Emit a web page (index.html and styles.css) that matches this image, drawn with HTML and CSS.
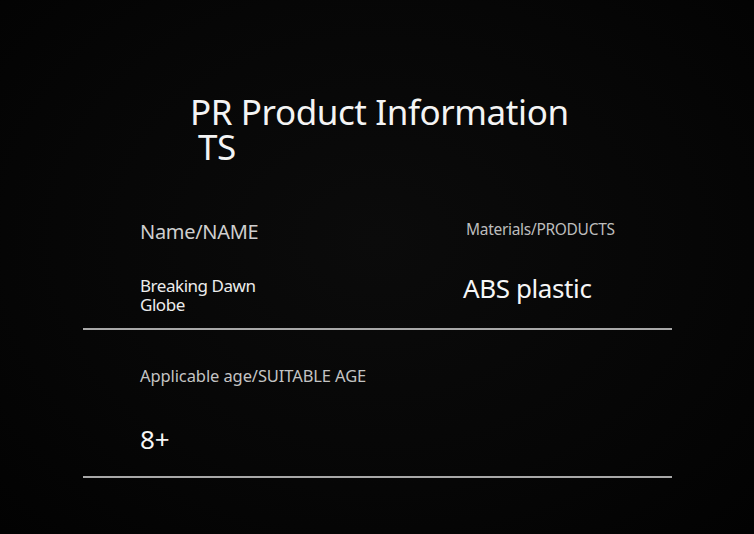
FILE: index.html
```html
<!DOCTYPE html>
<html>
<head>
<meta charset="utf-8">
<link rel="stylesheet" href="styles.css">
</head>
<body>
<div class="page">
  <h1 class="title">PR Product Information<br><span class="ts">TS</span></h1>
  <div class="info">
    <div class="row row-top">
      <div class="cell">
        <div class="label label-name">Name/NAME</div>
        <div class="value value-name">Breaking Dawn<br>Globe</div>
      </div>
      <div class="cell">
        <div class="label label-mat">Materials/PRODUCTS</div>
        <div class="value value-big value-mat">ABS plastic</div>
      </div>
    </div>
    <div class="row row-bottom">
      <div class="cell">
        <div class="label label-age">Applicable age/SUITABLE AGE</div>
        <div class="value value-big value-age">8+</div>
      </div>
    </div>
  </div>
</div>
</body>
</html>
```
FILE: styles.css
```css
html, body {
  margin: 0;
  padding: 0;
}
body {
  width: 754px;
  height: 534px;
  overflow: hidden;
  background: radial-gradient(ellipse at 50% 45%, #0b0b0b 0%, #060606 60%, #020202 100%);
  font-family: "Noto Sans", "Open Sans", sans-serif;
  color: #f2f2f2;
}
.page {
  padding: 94px 82px 0 83px;
}
.title {
  margin: 0 0 0 107px;
  font-weight: 400;
  font-size: 35px;
  line-height: 35px;
  letter-spacing: -0.42px;
  color: #f4f4f4;
}
.ts {
  padding-left: 8px;
}
.row {
  display: grid;
  grid-template-columns: 323px 1fr;
  padding-left: 57px;
  border-bottom: 2px solid #a8a8a8;
  box-sizing: border-box;
}
.row-top {
  height: 166px;
  padding-top: 55px;
}
.row-bottom {
  height: 148px;
  padding-top: 36px;
}
.label {
  color: #c4c4c4;
  letter-spacing: -0.3px;
}
.label-name {
  font-size: 20px;
  line-height: 26px;
  color: #cfcfcf;
}
.value-name {
  margin-top: 31px;
  font-size: 17px;
  line-height: 19px;
  color: #ececec;
  letter-spacing: -0.46px;
}
.label-mat {
  font-size: 15.5px;
  line-height: 20px;
  margin-left: 3px;
  color: #bdbdbd;
}
.value-big {
  font-size: 26px;
  line-height: 30px;
  color: #f6f6f6;
  letter-spacing: -0.4px;
}
.value-mat {
  margin-top: 34px;
}
.label-age {
  font-size: 16.5px;
  line-height: 20px;
  letter-spacing: -0.1px;
}
.value-age {
  margin-top: 38px;
  letter-spacing: 0;
}
```
